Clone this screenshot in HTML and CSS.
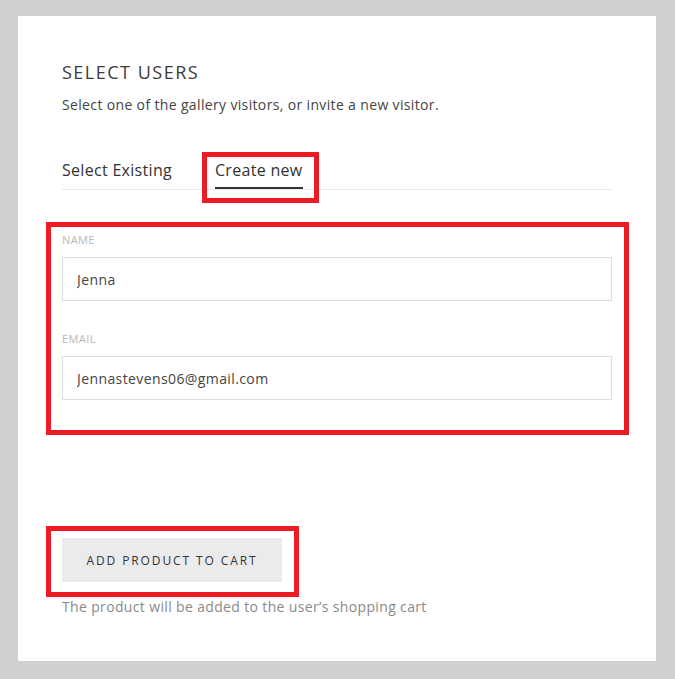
FILE: index.html
```html
<!DOCTYPE html>
<html lang="en">
<head>
    <meta charset="UTF-8">
    <title>Select users</title>
    <link rel="stylesheet" href="styles.css">
</head>
<body>
<div class="card">
    <h2 class="title">SELECT USERS</h2>
    <p class="intro">Select one of the gallery visitors, or invite a new visitor.</p>

    <div class="tabs">
        <span class="tab">Select Existing</span>
        <span class="tab active">Create new</span>
    </div>

    <div class="fields">
        <div class="field">
            <label for="name">NAME</label>
            <input type="text" id="name" value="Jenna">
        </div>
        <div class="field">
            <label for="email">EMAIL</label>
            <input type="text" id="email" value="Jennastevens06@gmail.com">
        </div>
    </div>

    <div class="actions">
        <button class="btn">ADD PRODUCT TO CART</button>
        <p class="note">The product will be added to the user’s shopping cart</p>
    </div>

    <!-- annotation frames -->
    <div class="mark mark-tab"></div>
    <div class="mark mark-fields"></div>
    <div class="mark mark-btn"></div>
</div>
</body>
</html>
```

FILE: styles.css
```css
*{
    margin:0;
    padding:0;
    box-sizing:border-box;
}
body{
    background:#d0d0d0;
    padding:16px 19px 18px 18px;
    font-family:"Open Sans","Liberation Sans",sans-serif;
}
.card{
    position:relative;
    width:638px;
    height:645px;
    background:#fff;
    padding:44px 44px 0 44px;
    display:flex;
    flex-direction:column;
}
.title{
    font-size:18px;
    line-height:24px;
    font-weight:400;
    letter-spacing:1.5px;
    color:#3c3c3c;
}
.intro{
    margin-top:11px;
    font-size:14px;
    line-height:20px;
    letter-spacing:0.35px;
    color:#444;
}
.tabs{
    margin-top:43px;
    display:flex;
    gap:43px;
    border-bottom:1px solid #e9e9e9;
}
.tab{
    font-size:16px;
    line-height:24px;
    letter-spacing:0.3px;
    color:#333;
    padding-bottom:5px;
    border-bottom:2px solid transparent;
}
.tab.active{
    border-bottom-color:#333;
}
.fields{
    margin-top:42px;
    display:flex;
    flex-direction:column;
    gap:30px;
}
.field label{
    display:block;
    font-size:11px;
    line-height:16px;
    letter-spacing:0.4px;
    color:#b8b8b8;
}
.field input{
    display:block;
    width:100%;
    height:44px;
    margin-top:9px;
    border:1px solid #dedede;
    padding:0 14px;
    font-family:inherit;
    font-size:14px;
    letter-spacing:0.4px;
    color:#444;
    outline:none;
}
.actions{
    margin-top:138px;
}
.btn{
    height:44px;
    width:220px;
    border:none;
    background:#ebebeb;
    font-family:inherit;
    font-size:12px;
    letter-spacing:1.9px;
    color:#333;
}
.note{
    margin-top:15px;
    font-size:14px;
    line-height:20px;
    letter-spacing:0.35px;
    color:#8a8a8a;
}
.mark{
    position:absolute;
    border:5px solid #ed1c24;
}
.mark-tab{
    left:184px;
    top:136px;
    width:117px;
    height:51px;
}
.mark-fields{
    left:28px;
    top:206px;
    width:583px;
    height:213px;
}
.mark-btn{
    left:28px;
    top:510px;
    width:253px;
    height:71px;
}
```
